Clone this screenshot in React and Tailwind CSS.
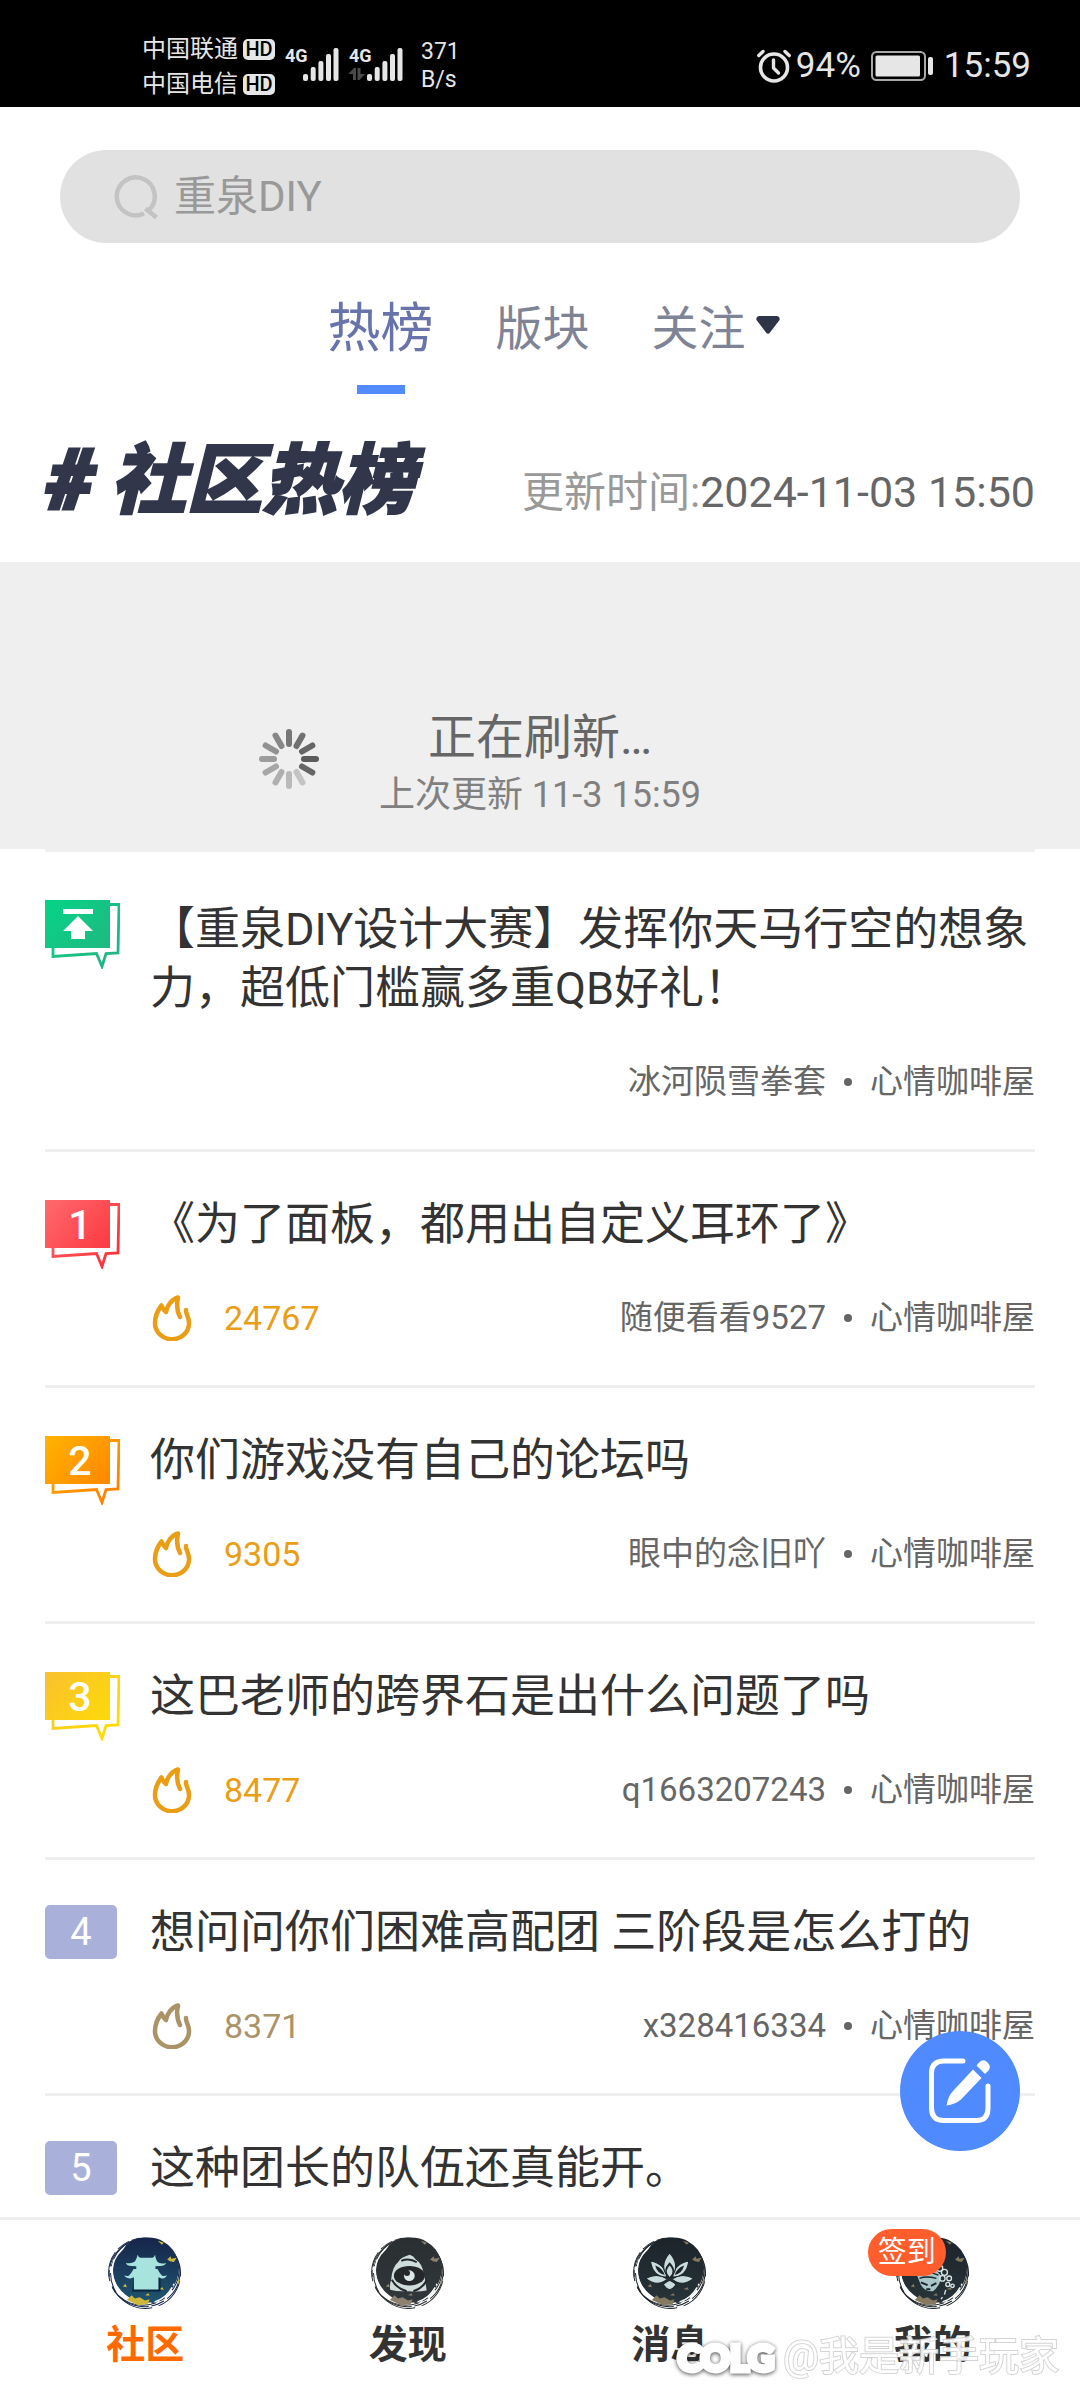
import React from "react";

const POSTS = [
  {
    badge: "top",
    title: "【重泉DIY设计大赛】发挥你天马行空的想象力，超低门槛赢多重QB好礼！",
    author: "冰河陨雪拳套",
    board: "心情咖啡屋",
  },
  { badge: "1", title: "《为了面板，都用出自定义耳环了》", heat: "24767", author: "随便看看9527", board: "心情咖啡屋" },
  { badge: "2", title: "你们游戏没有自己的论坛吗", heat: "9305", author: "眼中的念旧吖", board: "心情咖啡屋" },
  { badge: "3", title: "这巴老师的跨界石是出什么问题了吗", heat: "8477", author: "q1663207243", board: "心情咖啡屋" },
  { badge: "4", title: "想问问你们困难高配团 三阶段是怎么打的", heat: "8371", author: "x328416334", board: "心情咖啡屋" },
  { badge: "5", title: "这种团长的队伍还真能开。" },
];

const RIBBONS = {
  top: ["#06d486", "#22b581"],
  1: ["#ff6a6e", "#fb343c"],
  2: ["#ffb400", "#ff8200"],
  3: ["#f8c12f", "#ffdc05"],
};

function Signal() {
  return (
    <svg viewBox="0 0 36 34" className="h-[34px] w-9" fill="#e6e6e6" aria-hidden="true">
      <rect x="0" y="27" width="5" height="7" rx="2" />
      <rect x="7.7" y="20" width="5" height="14" rx="2" />
      <rect x="15.4" y="14" width="5" height="20" rx="2" />
      <rect x="23" y="7" width="5" height="27" rx="2" />
      <rect x="30.5" y="1" width="5" height="33" rx="2" />
    </svg>
  );
}

function Carrier({ name }) {
  return (
    <div className="flex h-[35px] items-center gap-[5px]">
      <span className="text-[24px] leading-[35px]">{name}</span>
      <span className="flex h-[21px] w-8 items-center justify-center rounded-[5px] bg-[#e6e6e6] text-[20px] leading-[21px] font-medium text-black">
        HD
      </span>
    </div>
  );
}

function StatusBar() {
  return (
    <div className="flex h-[107px] shrink-0 items-center justify-between bg-black pr-[49px] pl-[142px] text-[#e6e6e6]">
      <div className="flex items-center">
        <div className="pt-[26px]">
          <Carrier name="中国联通" />
          <Carrier name="中国电信" />
        </div>
        <div className="ml-[10px] flex items-end pt-[20px]">
          <span className="w-5 self-start text-[18px] leading-[18px] font-bold">4G</span>
          <div className="-ml-[2px]"><Signal /></div>
        </div>
        <div className="ml-[10px] flex items-end pt-[20px]">
          <div className="flex w-5 flex-col gap-[3px] self-start">
            <span className="text-[18px] leading-[18px] font-bold">4G</span>
            <svg viewBox="0 0 16 12" className="h-3 w-4" fill="#4a4a4a" aria-hidden="true">
              <path d="M0 5 5 0h2v12H4V6H0zM8.500 0h3v6H16l-5.500 6h-2z" />
            </svg>
          </div>
          <div className="-ml-[2px]"><Signal /></div>
        </div>
        <div className="ml-[18px] flex flex-col pt-[25px] text-[23px] leading-7">
          <span>371</span>
          <span>B/s</span>
        </div>
      </div>
      <div className="flex items-center pt-[25px] text-[35px] leading-10">
        <svg viewBox="0 0 34 34" className="h-[34px] w-[34px]" fill="none" stroke="#e6e6e6" strokeLinecap="round" aria-hidden="true">
          <circle cx="17" cy="18.500" r="13.500" strokeWidth="3.600" />
          <path d="M16.500 11v8l5 5" strokeWidth="3.400" strokeLinejoin="round" />
          <path d="M1.800 6.500 6 2.500M32.200 6.500 28 2.500" strokeWidth="3.400" />
        </svg>
        <span className="ml-[5px]">94%</span>
        <svg viewBox="0 0 62 30" className="ml-[10px] h-[30px] w-[62px]" fill="none" aria-hidden="true">
          <rect x="1" y="1" width="53" height="28" rx="4.500" stroke="#a8a8a8" strokeWidth="2" />
          <rect x="4.500" y="4.500" width="44.500" height="21" rx="1.500" fill="#e6e6e6" />
          <rect x="57" y="6" width="5" height="18" rx="2" fill="#e6e6e6" />
        </svg>
        <span className="ml-[11px]">15:59</span>
      </div>
    </div>
  );
}

function SearchBox() {
  return (
    <label className="mx-[60px] mt-[43px] flex h-[93px] items-center rounded-full bg-[#e1e1e1] pr-12 pl-[53px]">
      <svg viewBox="0 0 46 46" className="h-[46px] w-[46px]" fill="none" stroke="#c3c3c3" strokeWidth="4.500" aria-hidden="true">
        <path d="M31 39.500A19 19 0 1 1 36 36M32.500 34.500l11 9" />
      </svg>
      <input
        type="search"
        aria-label="搜索"
        placeholder="重泉DIY"
        className="ml-[15px] min-w-0 flex-1 bg-transparent text-[42px] leading-[60px] text-[#666] outline-none placeholder:text-[#999]"
      />
    </label>
  );
}

function Tabs() {
  return (
    <nav className="mt-[42px] flex items-start justify-center gap-[62px] pl-[27px] text-[47px] leading-[88px] text-[#7f8396]">
      <button type="button" className="flex flex-col items-center text-[53px] text-[#6873ab]">
        热榜
        <span className="mt-[12px] h-[9px] w-[48px] bg-[#528bff]" />
      </button>
      <button type="button">版块</button>
      <button type="button" className="flex items-center gap-[10px]">
        关注
        <svg viewBox="0 0 24 26" className="h-[26px] w-6" fill="#2f3449" aria-hidden="true">
          <path d="M3 0h18q3.500 1 2.500 4L14 16.500q-2 2.500-4 0L.5 4Q-.5 1 3 0z" />
        </svg>
      </button>
    </nav>
  );
}

function Spinner() {
  const shades = ["#777", "#707070", "#666", "#5c5c5c", "#666", "#c4c4c4", "#b9b9b9", "#afafaf", "#a6a6a6", "#9c9c9c", "#929292", "#878787"];
  return (
    <svg viewBox="-30 -30 60 60" className="h-[60px] w-[60px]" aria-hidden="true">
      {shades.map((c, i) => (
        <rect key={i} x="-3" y="-30" width="6" height="18" rx="3" fill={c} transform={`rotate(${i * 30})`} />
      ))}
    </svg>
  );
}

function Refreshing() {
  return (
    <div role="status" className="grid grid-cols-[1fr_auto_1fr] items-center bg-[#efefef] pt-[146px] pb-[26px]">
      <div className="flex justify-end pr-[60px] pb-[14px]"><Spinner /></div>
      <div className="flex flex-col items-center">
        <span className="text-[48px] leading-[60px] text-[#666]">正在刷新…</span>
        <span className="text-[36px] leading-[55px] text-[#808080]">上次更新 11-3 15:59</span>
      </div>
      <div />
    </div>
  );
}

function RankBadge({ kind }) {
  const colors = RIBBONS[kind];
  if (!colors) {
    return (
      <span className="mt-[45px] flex h-[54px] w-[72px] items-center justify-center rounded-[5px] bg-[#a9b0d9] text-[38px] leading-[54px] text-white">
        {kind}
      </span>
    );
  }
  const id = `ribbon-${kind}`;
  return (
    <svg viewBox="0 0 75 69" className="mt-[48px] h-[69px] w-[75px]" role="img" aria-label={kind === "top" ? "置顶" : kind}>
      <defs>
        <linearGradient id={id} x1="0" y1="0" x2="65" y2="60" gradientUnits="userSpaceOnUse">
          <stop offset="0" stopColor={colors[0]} />
          <stop offset="1" stopColor={colors[1]} />
        </linearGradient>
      </defs>
      <rect width="65" height="48" fill={`url(#${id})`} />
      <path d="M65 4.500h9L73 53l-12 .5-4 13-5.500-13L8 56.500V48" fill="none" stroke={`url(#${id})`} strokeWidth="2.800" />
      {kind === "top" ? (
        <path d="M18 9h30v5H18zM33 16l15 15h-8v8H26v-8h-8z" fill="#fff" />
      ) : (
        <text x="35" y="39" textAnchor="middle" fill="#fff" fontSize="41" fontWeight="500" fontFamily="Roboto, sans-serif">
          {kind}
        </text>
      )}
    </svg>
  );
}

function Flame() {
  return (
    <svg viewBox="0 0 40 46" className="h-[46px] w-10" fill="none" stroke="currentColor" strokeWidth="4.500" strokeLinecap="round" strokeLinejoin="round" aria-hidden="true">
      <path d="M34 15c-.6 4 3.300 7 3 13.500A17 16 0 0 1 3 28C3 20 6 15 9.500 10.500c1 2.500 2 4.500 4.500 6.500C15 10.500 19.500 4.500 26 2.500c-1.500 7-1.500 13 2 19.500" />
    </svg>
  );
}

function PostRow({ post }) {
  const pinned = post.badge === "top";
  const hot = Number(post.badge) <= 3;
  return (
    <li className="mx-[45px] flex border-b-[3px] border-[#efefef]">
      <div className="w-[105px] shrink-0"><RankBadge kind={post.badge} /></div>
      <div className={pinned ? "min-w-0 flex-1 pt-[48px] pb-[43px]" : "min-w-0 flex-1 pt-[43px] pb-[43px]"}>
        <a href="#post" className="block text-[45px] leading-[59px] text-[#333]">{post.title}</a>
        {post.author && (
          <div className="mt-[40px] flex h-12 items-center justify-between text-[33px] leading-[48px] text-[#666]">
            <div className={hot ? "flex items-center pl-[2px] text-[#ea9d15]" : "flex items-center pl-[2px] text-[#aa9467]"}>
              {post.heat && (
                <>
                  <Flame />
                  <span className="ml-[32px] text-[34px]">{post.heat}</span>
                </>
              )}
            </div>
            <div className="flex items-center">
              <span>{post.author}</span>
              <span className="mx-[18px] h-2 w-2 rounded-full bg-[#666]" />
              <span>{post.board}</span>
            </div>
          </div>
        )}
      </div>
    </li>
  );
}

function InkDisc({ id, from, to, gold, children }) {
  return (
    <svg viewBox="0 0 220 220" className="h-[74px] w-[74px]" aria-hidden="true">
      <defs>
        <linearGradient id={id} x1="0" y1="0" x2="0" y2="1">
          <stop offset="0" stopColor={from} />
          <stop offset="1" stopColor={to} />
        </linearGradient>
      </defs>
      <g fill="none" stroke={from}>
        <ellipse cx="108" cy="108" rx="106" ry="102" strokeWidth="3" strokeDasharray="90 12 40 8 130 20" />
        <ellipse cx="112" cy="110" rx="104" ry="104" strokeWidth="3" strokeDasharray="60 20 110 14" transform="rotate(35 110 110)" />
        <ellipse cx="106" cy="112" rx="98" ry="104" strokeWidth="3" strokeDasharray="150 30 20 10" transform="rotate(70 110 110)" />
      </g>
      <path d="M45 40Q62 8 105 5q38-3 60 12 34 18 43 60 8 42-16 78-26 38-62 45-45 4-78-25-32-26-38-66-2-38 31-69z" fill={`url(#${id})`} />
      <path d="M30 170q40 34 92 30 52-8 74-58" fill="none" stroke="#fff" strokeWidth="4" strokeDasharray="70 6 30 10" />
      <path d="M18 70q-14 44 10 84" fill="none" stroke="#fff" strokeWidth="4" />
      <g fill={gold}>
        <path d="M176 70l10-10 2 8 16-3-8 12-12-2zM148 14l18 6-6 6zM56 190l14-14 10 10 14-4 16 10 14-4-6 14-28 4zM150 158l12-6 4 8zM44 150l8-8 4 10zM110 176l10-6 4 8zM205 140l6-14 2 16z" />
      </g>
      {children}
    </svg>
  );
}

function TempleIcon() {
  return (
    <InkDisc id="disc-home" from="#16254a" to="#1f5570" gold="#cdb83a">
      <path d="M76 122h80v43H72z" fill="#0b2440" />
      <path
        d="M88 56q3 9 8 9h36q5 0 8-9 1 12 6 20 8 9 27 4-4 9-18 9l-14 1v8h6q6 12 14 20 7 3 14-1-4 11-16 9l-9-3v36H77v-36l-10 3q-14 1-19-9 8 4 14 1 8-8 14-20h8v-8l-14-1q-14 0-17-9 16 4 27-4 6-8 8-20z"
        fill="#a9e3dd"
      />
    </InkDisc>
  );
}

function EyeIcon() {
  return (
    <InkDisc id="disc-find" from="#2a2e30" to="#30383c" gold="#8d8170">
      <path d="M82 76q6-12 33-20 12 4 18 14 20 12 24 44 6 18 8 48-22 4-52 2-34 2-56-4-2-18 3-30 2-36 22-54z" fill="#cfdcda" />
      <path d="M90 74q24-10 46 4M62 130q14 26 44 34M166 130q-12 26-40 34" fill="none" stroke="#24282a" strokeWidth="6" />
      <ellipse cx="114" cy="118" rx="46" ry="29" fill="#24282a" />
      <circle cx="114" cy="118" r="16" fill="#dbe8e6" />
      <circle cx="107" cy="110" r="9" fill="#24282a" />
    </InkDisc>
  );
}

function LotusIcon() {
  return (
    <InkDisc id="disc-msg" from="#1c242a" to="#27343a" gold="#85795f">
      <g fill="#c9dbda" stroke="#1c242a" strokeWidth="3">
        <path d="M38 126q34-18 64 2-30 26-64-2zM180 126q-34-18-64 2 30 26 64-2z" />
        <path d="M109 132q20 10 18 14-8 12-18 14-10-2-18-14-2-4 18-14z" />
        <path d="M52 74q44 8 48 48-42 0-48-48zM166 74q-44 8-48 48 42 0 48-48z" />
        <path d="M109 50q36 42 0 76-36-34 0-76z" />
      </g>
      <g fill="#1c242a">
        <path d="M66 88q22 8 28 28-22-4-28-28zM152 88q-22 8-28 28 22-4 28-28z" />
        <path d="M109 78q26 26 0 48-26-22 0-48z" />
      </g>
      <path d="M109 88q18 18 0 34-18-16 0-34z" fill="#c9dbda" />
    </InkDisc>
  );
}

function WarriorIcon() {
  return (
    <InkDisc id="disc-me" from="#1c242a" to="#27343a" gold="#85795f">
      <path d="M62 116q20-20 50-22l22 24q-2 30-24 46-24 2-36-18z" fill="#a9c6c8" />
      <path d="M74 138l20 8M104 148l16-8M90 158h12" stroke="#1c242a" strokeWidth="6" />
      <path d="M60 112q28-12 66 4M70 126q20-8 50 0" fill="none" stroke="#1c242a" strokeWidth="4" />
      <g fill="none" stroke="#dbe6e6" strokeWidth="4">
        <circle cx="130" cy="96" r="9" />
        <circle cx="144" cy="108" r="9" />
        <circle cx="138" cy="126" r="8" />
        <circle cx="158" cy="126" r="7" />
        <circle cx="154" cy="144" r="6" />
        <circle cx="168" cy="148" r="5" />
        <path d="M148 160l-4 14M134 188l4-6" />
      </g>
    </InkDisc>
  );
}

function BottomNav() {
  const items = [
    { label: "社区", icon: <TempleIcon />, active: true },
    { label: "发现", icon: <EyeIcon /> },
    { label: "消息", icon: <LotusIcon /> },
    { label: "我的", icon: <WarriorIcon />, tip: "签到" },
  ];
  return (
    <nav className="relative grid shrink-0 grid-cols-4 border-t-[3px] border-[#efefef] bg-white pt-[16px] pr-[16px] pb-[26px] pl-[14px]">
      {items.map((it) => (
        <a key={it.label} href="#nav" className="flex flex-col items-center">
          <span className="relative">
            {it.icon}
            {it.tip && (
              <span className="absolute -top-[7px] -left-[28px] flex h-[47px] w-[78px] items-center justify-center rounded-full bg-[#ff5e2c] text-[29px] leading-[47px] text-white">
                {it.tip}
              </span>
            )}
          </span>
          <span className={it.active ? "mt-[6px] text-[39px] leading-[58px] font-bold text-[#ff6a00]" : "mt-[6px] text-[39px] leading-[58px] font-bold text-[#333]"}>
            {it.label}
          </span>
        </a>
      ))}
      <div className="pointer-events-none absolute right-[21px] bottom-[16px] flex items-center gap-[9px] leading-[54px] text-white">
        <span className="font-['Lato'] text-[36px] font-black [paint-order:stroke_fill] [-webkit-text-stroke:5px_#fff] drop-shadow-[0_1px_2px_rgba(0,0,0,0.7)]">
          COLG
        </span>
        <span className="text-[40px] opacity-90 [paint-order:stroke_fill] [-webkit-text-stroke:2px_#d0d0d0]">@我是新手玩家</span>
      </div>
    </nav>
  );
}

function ComposeButton() {
  return (
    <button type="button" aria-label="发帖" className="absolute right-[60px] bottom-[66px] flex h-[120px] w-[120px] items-center justify-center rounded-full bg-[#4f8aff]">
      <svg viewBox="0 0 120 120" className="h-[120px] w-[120px]" aria-hidden="true">
        <path d="M63 30H44q-12.500 0-12.500 12v35q0 12.500 12.500 12.500h32.500Q88 89.500 88 77V55" fill="none" stroke="#fff" strokeWidth="5" strokeLinecap="round" />
        <path d="M73 38.500 81.500 47 61 68.500Q55 73.500 46.500 74.500 48 65 53 60z" fill="#fff" />
        <path d="M76.500 34.500l3-3.500q4-3.500 8 .5t1 8l-3.500 3.500z" fill="#fff" />
      </svg>
    </button>
  );
}

export default function App() {
  return (
    <div className="flex h-screen flex-col bg-white font-[Roboto,'Noto_Sans_CJK_SC',sans-serif]" lang="zh-CN">
      <StatusBar />
      <header className="shrink-0">
        <SearchBox />
        <Tabs />
        <div className="flex items-end justify-between pt-[39px] pr-[45px] pb-[33px] pl-[47px]">
          <h1 className="flex items-center gap-[16px] font-black text-[#31364a] italic">
            <span className="text-[84px] leading-[96px] [-webkit-text-stroke:4px_#31364a]">#</span>
            <span className="text-[76px] leading-[96px] [-webkit-text-stroke:2px_#31364a]">社区热榜</span>
          </h1>
          <p className="text-[43px] leading-[72px] text-[#666]">
            <span className="text-[42px] text-[#999]">更新时间:</span>2024-11-03 15:50
          </p>
        </div>
      </header>
      <main className="relative min-h-0 flex-1">
        <div className="h-full overflow-y-auto [scrollbar-width:none]">
          <Refreshing />
          <div className="mx-[45px] h-[3px] bg-[#efefef]" />
          <ul>
            {POSTS.map((p) => (
              <PostRow key={p.badge} post={p} />
            ))}
          </ul>
        </div>
        <ComposeButton />
      </main>
      <BottomNav />
    </div>
  );
}
